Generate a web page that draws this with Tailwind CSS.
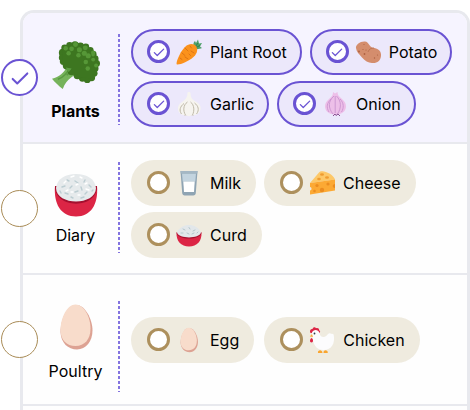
<!DOCTYPE html>
<html lang="en">
<head>
    <meta charset="UTF-8">
    <meta name="viewport" content="width=device-width, initial-scale=1.0">
    <title>Food Preferences</title>
    <script src="https://cdn.jsdelivr.net/npm/@tailwindcss/browser@4"></script>
</head>
<body class="bg-white font-['Inter',sans-serif] text-base text-black">

<!-- shared icons -->
<svg class="hidden" aria-hidden="true">
    <symbol id="tick" viewBox="0 0 24 24">
        <path d="M4 13l5 5L20 7" fill="none" stroke="#6a53d3" stroke-width="2.200" stroke-linecap="round" stroke-linejoin="round"/>
    </symbol>
    <symbol id="rice" viewBox="0 0 48 48">
        <path d="M3 15C1.500 33 9 45.500 24 45.500S46.500 33 45 15z" fill="#dc2545"/>
        <path d="M3 15c-.5 23.500 42.500 23.500 42 0z" fill="#a5102f"/>
        <path d="M4 17C5 8 13 3 24 3s19 5 20 14c-.5 18-39.500 18-40 0z" fill="#e6eaec"/>
        <g stroke="#bccdd2" stroke-width="1.400" stroke-linecap="round">
            <path d="M15 9l2 1M23 10l3 2M33 9l-1 2M10 16l3-1M20 15l-2 2M29 16l1 3M37 14l2 2M13 22l3 1M23 21l3-1M33 23l2-2M40 20l1-1M8 20l1 2M19 26l2 1M29 27l3-1"/>
        </g>
        <g stroke="#fff" stroke-width="1.400" stroke-linecap="round">
            <path d="M19 6l3-1M28 6l2 1M12 12l2-2M24 14l2-1M33 13l2-1M16 19l-2 1M34 18l3 1M26 24l2 0M19 21l2 0"/>
        </g>
    </symbol>
    <symbol id="egg" viewBox="0 0 48 48">
        <path d="M24 2c9 0 16.500 14 16.500 25.500C40.500 38 34 46.500 25 46.500S9 40 8.500 29C8.500 17 15 2 24 2z" fill="#dda293"/>
        <path d="M23.500 1.500C32 1.500 38.500 14 38.500 25.500c0 11-6 17.500-15 17.500S8.500 37 8.500 27C8.500 15 15 1.500 23.500 1.500z" fill="#f8dccb"/>
    </symbol>
</svg>

<div class="flex min-h-screen flex-col pt-2.5 pl-5">
    <main class="flex-1 rounded-t-[14px] border-3 border-b-0 border-[#e8e9ee] bg-[#fefefe]">

        <!-- Plants -->
        <section class="flex min-h-[131px] items-center rounded-t-[11px] border-b-2 border-[#e8e9ee] bg-[#f6f4ff]">
            <div class="-ml-[22px] grid shrink-0 place-items-center">
                <input id="plants" type="checkbox" checked class="peer col-start-1 row-start-1 size-[37px] appearance-none rounded-full border border-[#a98c57] bg-white checked:border-2 checked:border-[#6a53d3]">
                <svg class="pointer-events-none invisible col-start-1 row-start-1 size-[22px] peer-checked:visible"><use href="#tick"/></svg>
            </div>
            <label for="plants" class="flex w-[75px] shrink-0 flex-col items-center gap-2.5 self-start pt-7 font-bold">
                <svg class="size-12" viewBox="0 0 49 49">
                    <path d="M0 38.500C7 37 13 32 15 26l12-2 2 8c-6 3-14 6-18 17C7 46 3 42 0 38.500z" fill="#76b35b"/>
                    <path d="M6 39c6-2 10-7 12-12M15 35c3-4 7-6 12-7" stroke="#5b9a43" stroke-width="1.500" fill="none"/>
                    <g fill="#3d7620">
                        <circle cx="11" cy="12" r="4"/><circle cx="13" cy="7" r="3.500"/><circle cx="18" cy="4.500" r="3.500"/>
                        <circle cx="23.500" cy="4" r="3.800"/><circle cx="29" cy="5" r="3.500"/><circle cx="34.500" cy="6" r="3.500"/>
                        <circle cx="39" cy="9.500" r="3.500"/><circle cx="42" cy="13.500" r="3.500"/><circle cx="44" cy="18" r="3.500"/>
                        <circle cx="45.500" cy="23" r="3.500"/><circle cx="44" cy="28" r="3.500"/><circle cx="43" cy="33" r="3.500"/>
                        <circle cx="40.500" cy="37.500" r="3.500"/><circle cx="36" cy="39.500" r="3.500"/><circle cx="31" cy="38" r="3.500"/>
                        <circle cx="26" cy="35" r="4"/><circle cx="20" cy="31" r="4"/><circle cx="15" cy="25" r="4"/>
                        <circle cx="11.500" cy="21" r="3.500"/><circle cx="10.500" cy="17" r="3.500"/>
                        <path d="M11 8L24 3l14 6 6 10v10l-5 9-10-1-9-6-9-8z"/>
                    </g>
                    <g fill="#569737">
                        <circle cx="14" cy="7.500" r="2.300"/><circle cx="20" cy="8" r="2.400"/><circle cx="17" cy="12.500" r="2.300"/>
                        <circle cx="24" cy="3.500" r="2.500"/><circle cx="28" cy="9" r="2.600"/><circle cx="34" cy="7" r="2.500"/>
                        <circle cx="27" cy="14.500" r="2.300"/><circle cx="33" cy="12.500" r="2.600"/><circle cx="37" cy="15" r="2.600"/>
                        <circle cx="42" cy="12" r="2.200"/><circle cx="34.500" cy="21.500" r="2.300"/><circle cx="42" cy="19" r="2"/>
                        <circle cx="36.500" cy="28" r="2.300"/><circle cx="45" cy="25" r="2"/><circle cx="42" cy="14" r="1.800"/>
                    </g>
                    <path d="M14 27l3 5 3-4z" fill="#5c9d43"/>
                </svg>
                Plants
            </label>
            <div class="mt-[21px] ml-[5px] h-[91px] w-[2px] shrink-0 self-start bg-[repeating-linear-gradient(#8474e0_0_3px,transparent_3px_5px)]"></div>
            <div class="ml-[11px] flex flex-wrap gap-x-2 gap-y-1.5">
                <label class="flex h-[46px] items-center rounded-full border-2 border-[#6a53d3] bg-[#ece8fb] pr-[13px] pl-3.5">
                    <span class="grid place-items-center">
                        <input type="checkbox" checked class="peer col-start-1 row-start-1 size-[23px] appearance-none rounded-full border-3 border-[#a98c57] bg-white checked:border-[#6a53d3]">
                        <svg class="pointer-events-none invisible col-start-1 row-start-1 size-3.5 peer-checked:visible"><use href="#tick"/></svg>
                    </span>
                    <svg class="mr-2 ml-1.5 size-[26px]" viewBox="0 0 26 26">
                        <path d="M18 8c-1-3-.5-5 1-6l1 2 2-3.500 1 4 3-.5-2 3.500 2 1.500c-2 1-5 1.500-7 1z" fill="#4fa06a"/>
                        <path d="M19 8l3-4M20 8.500l4-2" stroke="#2f7f4c" fill="none"/>
                        <path d="M9 8c4-4 9-3.500 11-1 2 3 1.500 7-2 10.500C13 22 5 25.500 1.500 25.500c-1.500 0-1-2 0-5C3.500 15 6 11 9 8z" fill="#fb921c"/>
                        <path d="M9 9l3 3M14 7l1.500 2M6 14l3 2.500M18 14l-3-2M12 20l-3-2M4 19l2 1.500M13 15l1.500 1.500" stroke="#de7414" stroke-linecap="round"/>
                    </svg>
                    Plant Root
                </label>
                <label class="flex h-[46px] items-center rounded-full border-2 border-[#6a53d3] bg-[#ece8fb] pr-[13px] pl-3.5">
                    <span class="grid place-items-center">
                        <input type="checkbox" checked class="peer col-start-1 row-start-1 size-[23px] appearance-none rounded-full border-3 border-[#a98c57] bg-white checked:border-[#6a53d3]">
                        <svg class="pointer-events-none invisible col-start-1 row-start-1 size-3.5 peer-checked:visible"><use href="#tick"/></svg>
                    </span>
                    <svg class="mr-2 ml-1.5 size-[26px]" viewBox="0 0 26 26">
                        <path d="M1 9c-.5-3 4-7 9-6.500 4 .5 4 5 8 6.500 5 0 8.500 3 8 8-.5 5-4 7.500-9 7-4-.5-7-2-10-5.500S1.500 13 1 9z" fill="#d48d6d"/>
                        <path d="M13 13c1-3 3-4 6-4" stroke="#bd7454" fill="none"/>
                        <g fill="#ad6142"><circle cx="4" cy="12.500" r=".9"/><circle cx="9" cy="5.500" r=".6"/><circle cx="8" cy="10.500" r=".6"/><circle cx="9.500" cy="15" r=".9"/><circle cx="11" cy="11" r=".6"/><circle cx="19.500" cy="19" r=".7"/><circle cx="22.500" cy="16" r=".6"/></g>
                    </svg>
                    Potato
                </label>
                <label class="flex h-[46px] items-center rounded-full border-2 border-[#6a53d3] bg-[#ece8fb] pr-[13px] pl-3.5">
                    <span class="grid place-items-center">
                        <input type="checkbox" checked class="peer col-start-1 row-start-1 size-[23px] appearance-none rounded-full border-3 border-[#a98c57] bg-white checked:border-[#6a53d3]">
                        <svg class="pointer-events-none invisible col-start-1 row-start-1 size-3.5 peer-checked:visible"><use href="#tick"/></svg>
                    </span>
                    <svg class="mr-2 ml-1.5 size-[26px]" viewBox="0 0 26 26">
                        <path d="M8 25c2-1 8-1 10 0l-2-3h-6z" fill="#d3ccc0"/>
                        <path d="M11.500 1.500c1-1 2.500-.5 3 .5 0 5 2 7 6 9 3 1.700 4.500 4 4 7-.5 4-4 6.500-8 6-2.500 1.500-5 1.500-7 0-4 .5-7-2-7.500-5.500-.5-3 1-5.500 4-7.500 4-2.500 5.500-5 5.500-9.500z" fill="#f6f4ef"/>
                        <path d="M11.500 11C7 14 7 20 9.500 24M14.500 11c4 3 4 9 2 13M8 12.500c-4 3-5 7-2.500 10.500M18.500 12c4 3 5 7 2 11" fill="none" stroke="#bfb9a9"/>
                    </svg>
                    Garlic
                </label>
                <label class="flex h-[46px] items-center rounded-full border-2 border-[#6a53d3] bg-[#ece8fb] pr-[13px] pl-3.5">
                    <span class="grid place-items-center">
                        <input type="checkbox" checked class="peer col-start-1 row-start-1 size-[23px] appearance-none rounded-full border-3 border-[#a98c57] bg-white checked:border-[#6a53d3]">
                        <svg class="pointer-events-none invisible col-start-1 row-start-1 size-3.5 peer-checked:visible"><use href="#tick"/></svg>
                    </span>
                    <svg class="mr-2 ml-1.5 size-[26px]" viewBox="0 0 26 26">
                        <path d="M11 1l2 1.500L15.500 1c0 3 1.500 4.500 4 6.500 3 2.500 4.500 5 4.500 8 0 4.500-4 7.500-9 8h-3c-5-.5-9-3.500-9-8 0-3 1.500-5.500 4.500-8C10 5.500 11 4 11 1z" fill="#edbfe8"/>
                        <path d="M12 5C6 10 6 17 11 23M14.500 5c5 5 5 12 1 18M9 8c-4 4-5 8-2 13M18 8c4 4 4 9 1.500 13M13.200 5v17" fill="none" stroke="#cb94d0" stroke-width=".9"/>
                        <path d="M11 25l2-2 1 1.500 2-1.500 2 2" fill="none" stroke="#8b4f92"/>
                    </svg>
                    Onion
                </label>
            </div>
        </section>

        <!-- Diary -->
        <section class="flex min-h-[131px] items-center border-b-2 border-[#e8e9ee]">
            <div class="-ml-[22px] grid shrink-0 place-items-center">
                <input id="diary" type="checkbox" class="peer col-start-1 row-start-1 size-[37px] appearance-none rounded-full border border-[#a98c57] bg-white checked:border-2 checked:border-[#6a53d3]">
                <svg class="pointer-events-none invisible col-start-1 row-start-1 size-[22px] peer-checked:visible"><use href="#tick"/></svg>
            </div>
            <label for="diary" class="flex w-[75px] shrink-0 flex-col items-center gap-1 self-start pt-[27px]">
                <svg class="size-12"><use href="#rice"/></svg>
                Diary
            </label>
            <div class="mt-[18px] ml-[5px] h-[91px] w-[2px] shrink-0 self-start bg-[repeating-linear-gradient(#8474e0_0_3px,transparent_3px_5px)]"></div>
            <div class="ml-[11px] flex flex-wrap gap-x-2 gap-y-1.5">
                <label class="flex h-[46px] items-center rounded-full bg-[#efebdf] pr-[15px] pl-4">
                    <span class="grid place-items-center">
                        <input type="checkbox" class="peer col-start-1 row-start-1 size-[23px] appearance-none rounded-full border-3 border-[#ad905d] bg-white checked:border-[#6a53d3]">
                        <svg class="pointer-events-none invisible col-start-1 row-start-1 size-3.5 peer-checked:visible"><use href="#tick"/></svg>
                    </span>
                    <svg class="mr-2 ml-1.5 size-[26px]" viewBox="0 0 26 26">
                        <path d="M4.500 1h17l-1.700 22c-.1 1.500-1 2.500-2.500 2.500H8.700c-1.500 0-2.400-1-2.500-2.500z" fill="#8fa4b3"/>
                        <path d="M6 3.500h14l-.7 8H6.700z" fill="#c3d4df"/>
                        <path d="M7.300 11.500h11.400L18 22H8z" fill="#fff"/>
                        <path d="M4.500 1h17l-.2 2.500H4.700z" fill="#a4b7c4"/>
                    </svg>
                    Milk
                </label>
                <label class="flex h-[46px] items-center rounded-full bg-[#efebdf] pr-[15px] pl-4">
                    <span class="grid place-items-center">
                        <input type="checkbox" class="peer col-start-1 row-start-1 size-[23px] appearance-none rounded-full border-3 border-[#ad905d] bg-white checked:border-[#6a53d3]">
                        <svg class="pointer-events-none invisible col-start-1 row-start-1 size-3.5 peer-checked:visible"><use href="#tick"/></svg>
                    </span>
                    <svg class="mr-2 ml-1.5 size-[26px]" viewBox="0 0 26 26">
                        <path d="M1 13L10 2.500C11 1 13 1 15 1.500c5 1 10 4.500 11 8z" fill="#fdc868"/>
                        <path d="M1 13l25-3.500v11L1 24.500v-4c2 0 2-3.500 0-3.500z" fill="#fca934"/>
                        <g fill="#eb8c20"><circle cx="8" cy="15.500" r="1.600"/><circle cx="13" cy="20" r="2.200"/><circle cx="19" cy="14" r="1.600"/><circle cx="5.500" cy="21" r="1.300"/><path d="M26 14c-3 0-3 4 0 4z"/></g>
                        <g fill="#ef9c30"><ellipse cx="13" cy="4.500" rx="2" ry="1.300"/><ellipse cx="10" cy="9" rx="1.800" ry="1.200"/><ellipse cx="18" cy="7.500" rx="2" ry="1.300"/></g>
                    </svg>
                    Cheese
                </label>
                <label class="flex h-[46px] items-center rounded-full bg-[#efebdf] pr-[15px] pl-4">
                    <span class="grid place-items-center">
                        <input type="checkbox" class="peer col-start-1 row-start-1 size-[23px] appearance-none rounded-full border-3 border-[#ad905d] bg-white checked:border-[#6a53d3]">
                        <svg class="pointer-events-none invisible col-start-1 row-start-1 size-3.5 peer-checked:visible"><use href="#tick"/></svg>
                    </span>
                    <svg class="mr-2 ml-1.5 size-[26px]" viewBox="0 0 26 26">
                        <path d="M.5 10.500h25C26 19 21 24.500 13 24.500S0 19 .5 10.500z" fill="#dc2545"/>
                        <path d="M.5 10.500c1 8 24 8 25 0z" fill="#a5102f"/>
                        <path d="M1 10.500C3 5.500 8 3 13 3s10 2.500 12 7.500c-2 6.500-22 6.500-24 0z" fill="#e2e7ea"/>
                        <path d="M7 7l2 1M13 5.500l1 1.500M19 8l-2 1M5 11l2 0M11 11l2 1M16 12l2-1M21 11l1-1" stroke="#b4c6cc" stroke-linecap="round"/>
                    </svg>
                    Curd
                </label>
            </div>
        </section>

        <!-- Poultry -->
        <section class="flex min-h-[131px] items-center border-b-2 border-[#e8e9ee]">
            <div class="-ml-[22px] grid shrink-0 place-items-center">
                <input id="poultry" type="checkbox" class="peer col-start-1 row-start-1 size-[37px] appearance-none rounded-full border border-[#a98c57] bg-white checked:border-2 checked:border-[#6a53d3]">
                <svg class="pointer-events-none invisible col-start-1 row-start-1 size-[22px] peer-checked:visible"><use href="#tick"/></svg>
            </div>
            <label for="poultry" class="flex w-[75px] shrink-0 flex-col items-center gap-2 self-start pt-7">
                <svg class="size-12"><use href="#egg"/></svg>
                Poultry
            </label>
            <div class="mt-[26px] ml-[5px] h-[91px] w-[2px] shrink-0 self-start bg-[repeating-linear-gradient(#8474e0_0_3px,transparent_3px_5px)]"></div>
            <div class="ml-[11px] flex flex-wrap gap-x-2.5 gap-y-1.5">
                <label class="flex h-[46px] items-center rounded-full bg-[#efebdf] pr-[15px] pl-4">
                    <span class="grid place-items-center">
                        <input type="checkbox" class="peer col-start-1 row-start-1 size-[23px] appearance-none rounded-full border-3 border-[#ad905d] bg-white checked:border-[#6a53d3]">
                        <svg class="pointer-events-none invisible col-start-1 row-start-1 size-3.5 peer-checked:visible"><use href="#tick"/></svg>
                    </span>
                    <svg class="mr-2 ml-1.5 size-[26px]"><use href="#egg"/></svg>
                    Egg
                </label>
                <label class="flex h-[46px] items-center rounded-full bg-[#efebdf] pr-[15px] pl-4">
                    <span class="grid place-items-center">
                        <input type="checkbox" class="peer col-start-1 row-start-1 size-[23px] appearance-none rounded-full border-3 border-[#ad905d] bg-white checked:border-[#6a53d3]">
                        <svg class="pointer-events-none invisible col-start-1 row-start-1 size-3.5 peer-checked:visible"><use href="#tick"/></svg>
                    </span>
                    <svg class="mr-2 ml-1.5 size-[26px]" viewBox="0 0 26 26">
                        <path d="M1.500 6C.2 4 1.500 1.500 3.500 2 4-.3 6.500-.3 7 1.200c2-.8 3.500.5 3 2 1.500.3 1.500 2 0 3z" fill="#dc2545"/>
                        <path d="M3 5.500C4 2 9.500 2 10.500 6c.5 2.500 1.500 4 4 4 2 0 3.500-1.500 4.500-3 1.500-1.500 3-.5 3 0 1.500-.8 3 .3 2.800 1.500C26 16 23 23 14.500 23 8 23 4.500 18 4 13 3.800 10 2.200 8 3 5.500z" fill="#fcfcfd"/>
                        <path d="M3 7L.8 9.500 4 10z" fill="#f9ab3c"/>
                        <path d="M2.500 11c2 1 2 4.500 0 4.500s-2-3 0-4.500z" fill="#dc2545"/>
                        <circle cx="5.500" cy="6.500" r=".9" fill="#2b3b47"/>
                        <path d="M9 26c-.8-3.500 4.500-4 4.500 0zM14.500 26c-.5-4 5-3.500 4.200 0z" fill="#f9a52f"/>
                    </svg>
                    Chicken
                </label>
            </div>
        </section>

    </main>
</div>
</body>
</html>
